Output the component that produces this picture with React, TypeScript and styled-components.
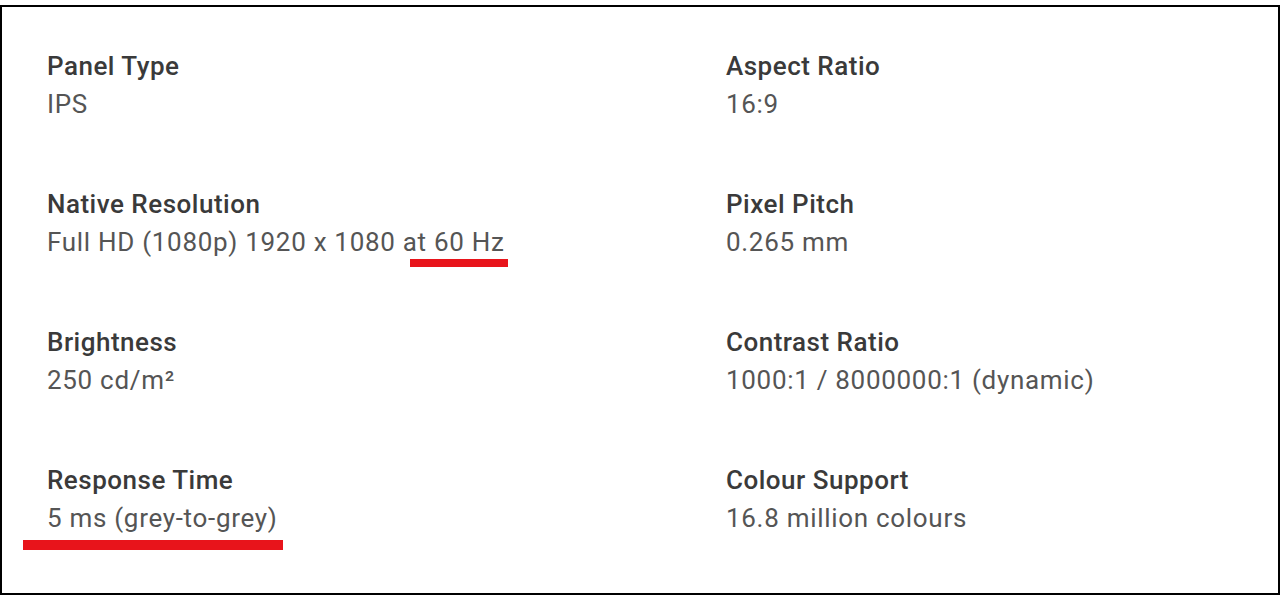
import * as React from 'react';
import styled, { createGlobalStyle } from 'styled-components';

interface ISpec {
  label: string;
  value: React.ReactNode;
}

const GlobalStyle = createGlobalStyle`
  html, body {
    margin: 0;
    padding: 0;
    background: #fff;
  }
  body {
    font-family: Roboto, "Liberation Sans", sans-serif;
  }
`;

const Frame = styled.div`
  margin-top: 5px;
  width: 1280px;
  height: 590px;
  box-sizing: border-box;
  border: 2px solid #000;
  background: #fff;
  padding: 40px 0 0 45px;
`;

const SpecGrid = styled.div`
  display: grid;
  grid-template-columns: 679px 1fr;
  row-gap: 62px;
`;

const SpecItem = styled.div`
  display: flex;
  flex-direction: column;
`;

const SpecLabel = styled.div`
  font-size: 26px;
  line-height: 38px;
  font-weight: 500;
  color: #3a3a3a;
  letter-spacing: 0.5px;
`;

const SpecValue = styled.div`
  font-size: 26px;
  line-height: 38px;
  color: #555;
  letter-spacing: 0.7px;
`;

// red hand-drawn highlight bars laid over the text
const Marked = styled.span<{ $variant: 'short' | 'long' }>`
  position: relative;
  &::after {
    content: '';
    position: absolute;
    background: #e8141b;
    left: ${(p) => (p.$variant === 'short' ? '7px' : '-24px')};
    right: ${(p) => (p.$variant === 'short' ? '-3px' : '-5px')};
    top: ${(p) => (p.$variant === 'short' ? '32px' : '37px')};
    height: ${(p) => (p.$variant === 'short' ? '8px' : '10px')};
  }
`;

const specs: ISpec[] = [
  { label: 'Panel Type', value: 'IPS' },
  { label: 'Aspect Ratio', value: '16:9' },
  {
    label: 'Native Resolution',
    value: (
      <>
        Full HD (1080p) 1920 x 1080 <Marked $variant="short">at 60 Hz</Marked>
      </>
    ),
  },
  { label: 'Pixel Pitch', value: '0.265 mm' },
  { label: 'Brightness', value: '250 cd/m²' },
  { label: 'Contrast Ratio', value: '1000:1 / 8000000:1 (dynamic)' },
  {
    label: 'Response Time',
    value: <Marked $variant="long">5 ms (grey-to-grey)</Marked>,
  },
  { label: 'Colour Support', value: '16.8 million colours' },
];

export default function App() {
  return (
    <>
      <GlobalStyle />
      <Frame>
        <SpecGrid>
          {specs.map((s) => (
            <SpecItem key={s.label}>
              <SpecLabel>{s.label}</SpecLabel>
              <SpecValue>{s.value}</SpecValue>
            </SpecItem>
          ))}
        </SpecGrid>
      </Frame>
    </>
  );
}
